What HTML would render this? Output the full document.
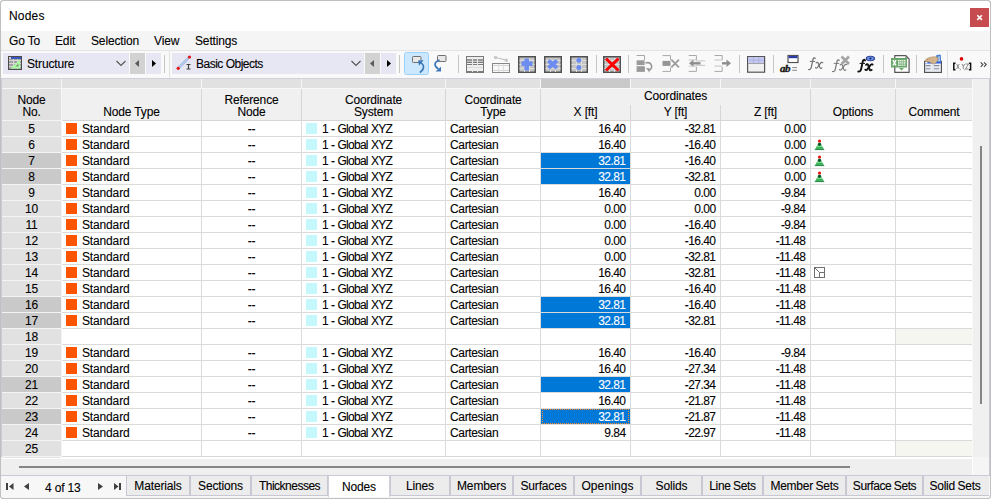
<!DOCTYPE html>
<html><head><meta charset="utf-8"><title>Nodes</title>
<style>
*{margin:0;padding:0;box-sizing:border-box}
html,body{width:991px;height:499px;overflow:hidden;background:#fff}
body{position:relative;font-family:"Liberation Sans",sans-serif;font-size:12px;color:#000;letter-spacing:-0.15px;-webkit-text-stroke:0.1px currentColor}
.a{position:absolute}
.t{position:absolute;white-space:nowrap;line-height:16px;height:16px}
.hl{position:absolute;height:1px}
.vl{position:absolute;width:1px}
.r{text-align:right;letter-spacing:-0.55px}
.c{text-align:center}
.tab{position:absolute;top:476px;height:20px;background:#e9e9ee;border:1px solid #cacad4;border-top:none;text-align:center;line-height:18px;white-space:nowrap}
</style></head><body>

<div class="a" style="left:0;top:0;width:991px;height:499px;border:1px solid #c0c0c0;border-radius:3px;background:#fff"></div>
<div class="t" style="left:9px;top:8px;letter-spacing:0.2px">Nodes</div>
<div class="a" style="left:970px;top:8px;width:19px;height:19px;background:#c64c50"></div>
<svg class="a" style="left:970px;top:8px" width="19" height="19" viewBox="0 0 19 19"><path d="M7.3 7.3l4.6 4.6M11.9 7.3l-4.6 4.6" stroke="#fff" stroke-width="1.6"/></svg>
<div class="a" style="left:1px;top:31px;width:989px;height:19px;background:#f5f5f5"></div>
<div class="t" style="left:9px;top:33px">Go To</div>
<div class="t" style="left:55px;top:33px">Edit</div>
<div class="t" style="left:91px;top:33px">Selection</div>
<div class="t" style="left:154px;top:33px">View</div>
<div class="t" style="left:195px;top:33px">Settings</div>
<div class="hl" style="left:1px;top:50px;width:989px;background:#e4e4e4"></div>
<div class="a" style="left:1px;top:51px;width:989px;height:27px;background:#f9f9f9"></div>
<div class="hl" style="left:1px;top:78px;width:989px;background:#d0d0da"></div>
<div class="a" style="left:3px;top:53px;width:126px;height:21px;background:#e6e7f2"></div>
<div class="t" style="left:27px;top:56px;letter-spacing:-0.15px">Structure</div>
<div class="a" style="left:130px;top:53px;width:15px;height:21px;background:#d2d2d2"></div>
<div class="a" style="left:146px;top:53px;width:15px;height:21px;background:#e6e7f2"></div>
<div class="a" style="left:172px;top:53px;width:192px;height:21px;background:#e6e7f2"></div>
<div class="t" style="left:196px;top:56px;letter-spacing:-0.5px">Basic Objects</div>
<div class="a" style="left:365px;top:53px;width:15px;height:21px;background:#d2d2d2"></div>
<div class="a" style="left:381px;top:53px;width:15px;height:21px;background:#e6e7f2"></div>
<svg class="a" style="left:0;top:0" width="991" height="80" viewBox="0 0 991 80"><path d="M116.5 61 L121 65.5 L125.5 61" fill="none" stroke="#555" stroke-width="1.1"/><path d="M139 60 L135 63.5 L139 67Z" fill="#5a5a5a"/><path d="M152 60 L156 63.5 L152 67Z" fill="#000"/><path d="M351.5 61 L356 65.5 L360.5 61" fill="none" stroke="#555" stroke-width="1.1"/><path d="M374 60 L370 63.5 L374 67Z" fill="#5a5a5a"/><path d="M387 60 L391 63.5 L387 67Z" fill="#000"/><path d="M164.5 55V73" stroke="#c6c6c6" stroke-width="1"/><path d="M399.5 55V73" stroke="#c6c6c6" stroke-width="1"/><path d="M458.5 55V73" stroke="#c6c6c6" stroke-width="1"/><path d="M596.5 55V73" stroke="#c6c6c6" stroke-width="1"/><path d="M628.5 55V73" stroke="#c6c6c6" stroke-width="1"/><path d="M739.5 55V73" stroke="#c6c6c6" stroke-width="1"/><path d="M773.5 55V73" stroke="#c6c6c6" stroke-width="1"/><path d="M883.5 55V73" stroke="#c6c6c6" stroke-width="1"/><path d="M916.5 55V73" stroke="#c6c6c6" stroke-width="1"/><path d="M169.5 51V78" stroke="#e2e2e2" stroke-width="1"/><path d="M947.5 51V78" stroke="#e2e2e2" stroke-width="1"/><rect x="8" y="56" width="14" height="14" fill="#4a4a4a"/>
<rect x="9" y="57" width="12" height="12" fill="#a0a0a0"/>
<path d="M9 60.5h12M9 63.5h12M9 66.5h12M13.5 59v10M17.5 59v10" stroke="#d8d8d8" stroke-width="1"/>
<rect x="11" y="57" width="10" height="2" fill="#3a56c0"/>
<rect x="9" y="57" width="2" height="2" fill="#d0d0d0"/>
<path d="M10.5 68.5 L20 59.5 L20 68.5 Z" fill="#a8fca0"/>
<path d="M15.5 66.5 L18.5 63.5 L18.5 66.5 Z" fill="#8a8a8a"/><path d="M178 68.5 L189.5 56.8" stroke="#a0b8e0" stroke-width="2.6"/>
<path d="M178 68.5 L189.5 56.8" stroke="#d0e4f8" stroke-width="0.8"/>
<circle cx="178.2" cy="68.3" r="1.6" fill="#e81010"/><circle cx="189.5" cy="57" r="1.6" fill="#e81010"/>
<path d="M186.5 64.5h4M188.5 64.5v4.5M186.5 69h4" stroke="#404040" stroke-width="1.1"/><rect x="404.5" y="52.5" width="24" height="22" rx="2" fill="#cce8ff" stroke="#99d1ff" stroke-width="1"/><rect x="412.5" y="56.5" width="8.5" height="6" rx="0.8" fill="#e8e8e8" stroke="#707070"/>
<path d="M419.5 62.5 C424.5 64 425 69 419.8 72.5" fill="none" stroke="#3d78b8" stroke-width="1.7"/>
<path d="M418 60.5 L423.6 60.3 L419 65.7 Z" fill="#3d78b8"/>
<rect x="437.5" y="55.5" width="8.5" height="6" rx="0.8" fill="#e8e8e8" stroke="#707070"/>
<path d="M439.5 60 C434 62 433.5 66 438.5 69" fill="none" stroke="#3d78b8" stroke-width="1.7"/>
<path d="M435.5 71.6 L441 66.8 L441 71.6 Z" fill="#3d78b8"/><rect x="466.5" y="56.5" width="17" height="16" fill="#f0f0f0" stroke="#7a7a7a"/>
<rect x="467" y="59" width="16" height="2.5" fill="#9a9a9a"/>
<path d="M467 62.5h16M467 64.5h16M467 71.5h16" stroke="#7a7a7a" stroke-width="1"/>
<path d="M467 67.5h16" stroke="#d8d8d8" stroke-width="1"/>
<path d="M472.5 57v15M477.5 57v15" stroke="#e8e8e8" stroke-width="1"/><path d="M495.6 57.5 L506.3 60.1" stroke="#c4c4c4" stroke-width="1.2"/>
<circle cx="495.6" cy="57.5" r="1.7" fill="#c8c8c8"/><circle cx="506.3" cy="60.2" r="1.7" fill="#c8c8c8"/>
<rect x="492.5" y="63.5" width="17" height="9" fill="#f8f8f8" stroke="#888"/>
<path d="M493 65.5h16M493 70.5h16" stroke="#d4d4d4" stroke-width="1"/>
<path d="M498.5 64v8M503.5 64v8" stroke="#e0e0e0" stroke-width="1"/><rect x="518.75" y="56.75" width="16.5" height="15.5" fill="#c4c4c4" stroke="#505050" stroke-width="1.5"/>
<path d="M519.5 60.5h15M519.5 64.5h15M519.5 68.5h15M524.5 58v14M529.5 58v14" stroke="#dcdcdc" stroke-width="1"/><path d="M526.7 58.5v12M521.5 63.6h11" stroke="#6c8cf0" stroke-width="4.6"/><rect x="544.75" y="56.75" width="16.5" height="15.5" fill="#c4c4c4" stroke="#505050" stroke-width="1.5"/>
<path d="M545.5 60.5h15M545.5 64.5h15M545.5 68.5h15M550.5 58v14M555.5 58v14" stroke="#dcdcdc" stroke-width="1"/><path d="M548.5 60.5l8.5 7.5M557 60.5l-8.5 7.5" stroke="#6c8cf0" stroke-width="4"/><rect x="570.75" y="56.75" width="16.5" height="15.5" fill="#c4c4c4" stroke="#505050" stroke-width="1.5"/>
<path d="M571.5 60.5h15M571.5 64.5h15M571.5 68.5h15M576.5 58v14M581.5 58v14" stroke="#dcdcdc" stroke-width="1"/><circle cx="578.8" cy="60.3" r="2.5" fill="#6c8cf0"/><circle cx="578.8" cy="67.6" r="2.5" fill="#6c8cf0"/><rect x="603.75" y="56.75" width="16.5" height="15.5" fill="#c4c4c4" stroke="#505050" stroke-width="1.5"/>
<path d="M604.5 60.5h15M604.5 64.5h15M604.5 68.5h15M609.5 58v14M614.5 58v14" stroke="#dcdcdc" stroke-width="1"/><path d="M606 58.7l12.5 11.8M618.5 58.7l-12.5 11.8" stroke="#ff0000" stroke-width="3"/><path d="M636.6 55.5h8M644.5 55.5v4.5M636.6 71.5h8M644.5 67v4.5" stroke="#a8a8a8" stroke-width="1"/>
<rect x="636.6" y="60.3" width="8" height="4.8" fill="#9a9a9a"/><rect x="636.6" y="66.2" width="8" height="5" fill="#9a9a9a"/>
<path d="M645.5 63 C652 61 654 69 648.5 70.5" fill="none" stroke="#9a9a9a" stroke-width="1.6"/>
<path d="M646 68 L649.5 72.8 L649.5 68.2Z" fill="#9a9a9a"/><path d="M662.5 55.6h8M670.5 55.6v4.2M662.5 71.4h8M670.5 67.5v3.9" stroke="#a8a8a8" stroke-width="1"/>
<rect x="662.5" y="60.9" width="8" height="5" fill="#959595"/>
<path d="M671.3 59.7 L679 67.3M679 59.7 L671.3 67.3" stroke="#9a9a9a" stroke-width="1.8"/><path d="M688.7 55.5h7.7M696.4 55.5v4.5M688.7 71.4h7.7M696.4 67v4.4" stroke="#a8a8a8" stroke-width="1"/>
<path d="M688.7 60h7.7M688.7 66.1h7.7M696 60.9h9.2M696 65.3h9.2" stroke="#c4c4c4" stroke-width="1"/>
<path d="M692 63.3h8.5" stroke="#8e8e8e" stroke-width="2.4"/><path d="M689 63.3 L693.5 59.8 L693.5 66.8Z" fill="#8e8e8e"/><path d="M714.5 55.5h7.7M722.2 55.5v4.5M714.5 71.4h7.7M722.2 67v4.4" stroke="#a8a8a8" stroke-width="1"/>
<path d="M714.5 60h7.7M714.5 66.1h7.7" stroke="#c4c4c4" stroke-width="1"/>
<path d="M722 63.3h6" stroke="#8e8e8e" stroke-width="2.4"/><path d="M731 63.3 L726.5 59.5 L726.5 67Z" fill="#8e8e8e"/><rect x="747.6" y="56.6" width="17" height="15.6" fill="#f0f0f0" stroke="#555" stroke-width="1.2"/>
<rect x="748.2" y="57.2" width="15.8" height="6" fill="#c4c8f4"/>
<path d="M748.2 60.2h15.8M753.5 57.2v6M758.7 57.2v6" stroke="#b0b4dc" stroke-width="1"/>
<path d="M748.2 63.5h15.8" stroke="#909090" stroke-width="0.8"/><rect x="788" y="55.5" width="10" height="7" fill="#fff" stroke="#505050" stroke-width="1.2"/>
<rect x="788.6" y="56" width="8.8" height="2.2" fill="#2a3aa8"/>
<rect x="789.6" y="59.2" width="7" height="2.2" fill="#fff"/>
<text x="780" y="71.6" font-family="Liberation Serif" font-style="italic" font-weight="bold" font-size="11" fill="#111" stroke="#111" stroke-width="0.3" letter-spacing="-0.6">ab</text>
<path d="M792.2 67.6h4.8M792.2 70.3h4.8" stroke="#888" stroke-width="1"/><g transform="translate(0 0)" fill="none" stroke="#6e6e6e" stroke-linecap="round"><path d="M815.2 58.4 c-0.5-0.9-1.8-0.8-2.1 0.6 L811.2 67.6 c-0.4 1.6-1.6 2.3-2.7 1.9" stroke-width="1.2"/><path d="M810.2 61.4h4.6" stroke-width="1"/><path d="M816.2 62.8 c0.8-0.8 1.9-0.7 2.2 0.4 l1.5 4.4 c0.3 0.9 1.3 1 2 0.3" stroke-width="1.2"/><path d="M822.8 62.6 c-0.6-0.5-1.6-0.4-2.2 0.5 l-3.2 4.4 c-0.5 0.7-1.4 0.8-1.9 0.2" stroke-width="1.2"/></g><g transform="translate(24 2)" fill="none" stroke="#7a7a7a" stroke-linecap="round"><path d="M815.2 58.4 c-0.5-0.9-1.8-0.8-2.1 0.6 L811.2 67.6 c-0.4 1.6-1.6 2.3-2.7 1.9" stroke-width="1.2"/><path d="M810.2 61.4h4.6" stroke-width="1"/><path d="M816.2 62.8 c0.8-0.8 1.9-0.7 2.2 0.4 l1.5 4.4 c0.3 0.9 1.3 1 2 0.3" stroke-width="1.2"/><path d="M822.8 62.6 c-0.6-0.5-1.6-0.4-2.2 0.5 l-3.2 4.4 c-0.5 0.7-1.4 0.8-1.9 0.2" stroke-width="1.2"/></g><path d="M841.5 56.5l7.5 7.5M849 56.5l-7.5 7.5" stroke="#a4a4a4" stroke-width="2.6"/><g transform="translate(49.8 2)" fill="none" stroke="#111" stroke-linecap="round"><path d="M815.2 58.4 c-0.5-0.9-1.8-0.8-2.1 0.6 L811.2 67.6 c-0.4 1.6-1.6 2.3-2.7 1.9" stroke-width="1.9"/><path d="M810.2 61.4h4.6" stroke-width="1"/><path d="M816.2 62.8 c0.8-0.8 1.9-0.7 2.2 0.4 l1.5 4.4 c0.3 0.9 1.3 1 2 0.3" stroke-width="1.9"/><path d="M822.8 62.6 c-0.6-0.5-1.6-0.4-2.2 0.5 l-3.2 4.4 c-0.5 0.7-1.4 0.8-1.9 0.2" stroke-width="1.9"/></g><ellipse cx="870.4" cy="58.5" rx="4.6" ry="2.8" fill="#2a3a90"/>
<ellipse cx="870.4" cy="58.5" rx="3.4" ry="1.9" fill="#6a90e0"/>
<circle cx="870.4" cy="58.5" r="1" fill="#102060"/><path d="M894.8 55.6h11l3.3 3.3v13.5h-14.3z" fill="#fff" stroke="#555" stroke-width="1.2"/>
<path d="M905.3 56.3l0 2.6 2.8 0z" fill="#666"/>
<rect x="891" y="58" width="16" height="9.5" fill="#6aa66a"/>
<path d="M893 60.2l3 5.3M896 60.2l-3 5.3" stroke="#fff" stroke-width="1.5"/>
<rect x="898" y="60" width="7.4" height="5.8" fill="#fff"/>
<path d="M898 61.6h7.4M898 63.1h7.4M898 64.6h7.4M899.9 60v5.8M901.8 60v5.8M903.6 60v5.8" stroke="#6aa66a" stroke-width="0.6"/>
<path d="M899 68h5l-2.5 2.6z" fill="#6aa66a"/><rect x="924.6" y="61.4" width="16.8" height="11" fill="#eef0f6" stroke="#4a4a4a" stroke-width="1.1"/>
<rect x="925.1" y="61.9" width="15.8" height="1.6" fill="#2a5ae8"/>
<rect x="925.2" y="62" width="2.2" height="1.3" fill="#fff"/>
<path d="M933 64v8" stroke="#dadae2" stroke-width="1"/>
<path d="M925.8 65.6h4.8M925.8 68.8h4.8M934 65.6h5.3M934 68.8h5.3" stroke="#8a8a94" stroke-width="1.1"/>
<path d="M925.8 66.8h4.8M934 66.8h5.3M925.8 70h4.8M934 70h5.3" stroke="#c8d0f0" stroke-width="0.6"/>
<path d="M936.2 55.5 Q936.5 54.8 938 54.8 L940.8 54.8 L941.2 62 L936.5 62 Z" fill="#4a7ed0"/>
<path d="M938.2 56.2 L939.8 56.2 L940 61.5 L938.4 61.5 Z" fill="#b8d0f0"/>
<path d="M924.8 61.2 C925.5 59 927.5 58 930 57.4 C932.5 56.6 935.5 56.3 937.2 57.2 C938.4 58 938.2 60 937 61.6 C935.8 63 934.6 64.2 933.2 64 C932 63.8 931.2 62.6 930 62.2 C928.5 61.8 926.2 62 924.8 61.2 Z" fill="#d6b68e" stroke="#9c7a52" stroke-width="0.5"/>
<path d="M927 60 l1.2-0.6M929.5 59.2l1.2-0.5M932 60.4l1 0.6" stroke="#9c7a52" stroke-width="0.6"/><circle cx="961.5" cy="58.9" r="1.8" fill="#e00000"/>
<path d="M955.5 63.3h-1.7v6.5h1.7M968.9 63.3h1.7v6.5h-1.7" fill="none" stroke="#111" stroke-width="1.5"/>
<path d="M956.6 64l2.6 5M959.2 64l-2.6 5M962 64l1.3 2.4l1.3-2.4M963.3 66.4v2.6M965.5 64h3l-3 5h3" fill="none" stroke="#707070" stroke-width="0.8"/>
<path d="M960.5 69.3l-0.4 0.9M965 69.3l-0.4 0.9" stroke="#505050" stroke-width="0.8"/><path d="M980.7 62.3l2.2 2.3-2.2 2.3M984 62.3l2.2 2.3-2.2 2.3" fill="none" stroke="#444" stroke-width="1.1"/></svg>
<div class="a" style="left:1px;top:79px;width:971px;height:9px;background:#e1e1e1"></div>
<div class="a" style="left:541px;top:79px;width:89px;height:9px;background:#c9c9c9"></div>
<div class="hl" style="left:1px;top:88px;width:971px;background:#f7f7f7"></div>
<div class="vl" style="left:61px;top:79px;height:9px;background:#f7f7f7"></div>
<div class="vl" style="left:201px;top:79px;height:9px;background:#f7f7f7"></div>
<div class="vl" style="left:301px;top:79px;height:9px;background:#f7f7f7"></div>
<div class="vl" style="left:445px;top:79px;height:9px;background:#f7f7f7"></div>
<div class="vl" style="left:540px;top:79px;height:9px;background:#f7f7f7"></div>
<div class="vl" style="left:630px;top:79px;height:9px;background:#f7f7f7"></div>
<div class="vl" style="left:720px;top:79px;height:9px;background:#f7f7f7"></div>
<div class="vl" style="left:810px;top:79px;height:9px;background:#f7f7f7"></div>
<div class="vl" style="left:895px;top:79px;height:9px;background:#f7f7f7"></div>
<div class="a" style="left:1px;top:89px;width:971px;height:31px;background:#f0f0f0"></div>
<div class="a" style="left:2px;top:89px;width:59px;height:31px;background:#e1e1e1"></div>
<div class="vl" style="left:61px;top:89px;height:31px;background:#f7f7f7"></div>
<div class="vl" style="left:201px;top:89px;height:31px;background:#d6d6d6"></div>
<div class="vl" style="left:301px;top:89px;height:31px;background:#d6d6d6"></div>
<div class="vl" style="left:445px;top:89px;height:31px;background:#d6d6d6"></div>
<div class="vl" style="left:540px;top:89px;height:31px;background:#d6d6d6"></div>
<div class="vl" style="left:810px;top:89px;height:31px;background:#d6d6d6"></div>
<div class="vl" style="left:895px;top:89px;height:31px;background:#d6d6d6"></div>
<div class="vl" style="left:630px;top:105px;height:15px;background:#d6d6d6"></div>
<div class="vl" style="left:720px;top:105px;height:15px;background:#d6d6d6"></div>
<div class="hl" style="left:62px;top:120px;width:910px;background:#d6d6d6"></div>
<div class="hl" style="left:2px;top:120px;width:59px;background:#f4f4f4"></div>
<div class="t c" style="left:2px;top:92px;width:59px">Node</div>
<div class="t c" style="left:2px;top:104px;width:59px">No.</div>
<div class="t c" style="left:62px;top:104px;width:139px">Node Type</div>
<div class="t c" style="left:202px;top:92px;width:99px">Reference</div>
<div class="t c" style="left:202px;top:104px;width:99px">Node</div>
<div class="t c" style="left:302px;top:92px;width:143px">Coordinate</div>
<div class="t c" style="left:302px;top:104px;width:143px">System</div>
<div class="t c" style="left:446px;top:92px;width:94px">Coordinate</div>
<div class="t c" style="left:446px;top:104px;width:94px">Type</div>
<div class="t c" style="left:541px;top:88px;width:269px">Coordinates</div>
<div class="t c" style="left:541px;top:104px;width:89px">X [ft]</div>
<div class="t c" style="left:631px;top:104px;width:89px">Y [ft]</div>
<div class="t c" style="left:721px;top:104px;width:89px">Z [ft]</div>
<div class="t c" style="left:811px;top:104px;width:84px">Options</div>
<div class="t c" style="left:896px;top:104px;width:76px">Comment</div>
<div class="a" style="left:62px;top:121px;width:910px;height:336px;background:#fff"></div>
<div class="a" style="left:2px;top:121px;width:59px;height:15px;background:#e1e1e1"></div>
<div class="hl" style="left:2px;top:136px;width:59px;background:#f4f4f4"></div>
<div class="hl" style="left:62px;top:136px;width:910px;background:#dadada"></div>
<div class="t c" style="left:2px;top:121px;width:59px">5</div>
<div class="a" style="left:66px;top:123px;width:11px;height:11px;background:#ff5500"></div>
<div class="t" style="left:82px;top:121px">Standard</div>
<div class="t c" style="left:202px;top:121px;width:99px">--</div>
<div class="a" style="left:306px;top:123px;width:11px;height:11px;background:#c4f8fc"></div>
<div class="t" style="left:322px;top:121px;letter-spacing:-0.75px;word-spacing:0.6px">1 - Global XYZ</div>
<div class="t" style="left:450px;top:121px;letter-spacing:-0.35px">Cartesian</div>
<div class="t r" style="left:541px;top:121px;width:84.5px">16.40</div>
<div class="t r" style="left:631px;top:121px;width:84.5px">-32.81</div>
<div class="t r" style="left:721px;top:121px;width:84.5px">0.00</div>
<div class="a" style="left:2px;top:137px;width:59px;height:15px;background:#e1e1e1"></div>
<div class="hl" style="left:2px;top:152px;width:59px;background:#f4f4f4"></div>
<div class="hl" style="left:62px;top:152px;width:910px;background:#dadada"></div>
<div class="t c" style="left:2px;top:137px;width:59px">6</div>
<div class="a" style="left:66px;top:139px;width:11px;height:11px;background:#ff5500"></div>
<div class="t" style="left:82px;top:137px">Standard</div>
<div class="t c" style="left:202px;top:137px;width:99px">--</div>
<div class="a" style="left:306px;top:139px;width:11px;height:11px;background:#c4f8fc"></div>
<div class="t" style="left:322px;top:137px;letter-spacing:-0.75px;word-spacing:0.6px">1 - Global XYZ</div>
<div class="t" style="left:450px;top:137px;letter-spacing:-0.35px">Cartesian</div>
<div class="t r" style="left:541px;top:137px;width:84.5px">16.40</div>
<div class="t r" style="left:631px;top:137px;width:84.5px">-16.40</div>
<div class="t r" style="left:721px;top:137px;width:84.5px">0.00</div>
<svg class="a" style="left:814px;top:137px" width="12" height="14" viewBox="0 0 12 14">
<path d="M3.5 8.3 L7.5 8.3 L10.2 12.6 L0.8 12.6 Z" fill="#3cb45a"/>
<path d="M3.5 8.3 L7.5 8.3 L8.5 10 L2.5 10 Z" fill="#7ad890"/>
<path d="M0.8 12.6h9.4" stroke="#1f7a3a" stroke-width="0.9"/>
<circle cx="5.5" cy="7.2" r="1.7" fill="#0c5a28"/>
<circle cx="5.5" cy="4" r="1.6" fill="#f01010"/>
</svg>
<div class="a" style="left:2px;top:153px;width:59px;height:15px;background:#c9c9c9"></div>
<div class="hl" style="left:2px;top:168px;width:59px;background:#f4f4f4"></div>
<div class="hl" style="left:62px;top:168px;width:910px;background:#dadada"></div>
<div class="t c" style="left:2px;top:153px;width:59px">7</div>
<div class="a" style="left:66px;top:155px;width:11px;height:11px;background:#ff5500"></div>
<div class="t" style="left:82px;top:153px">Standard</div>
<div class="t c" style="left:202px;top:153px;width:99px">--</div>
<div class="a" style="left:306px;top:155px;width:11px;height:11px;background:#c4f8fc"></div>
<div class="t" style="left:322px;top:153px;letter-spacing:-0.75px;word-spacing:0.6px">1 - Global XYZ</div>
<div class="t" style="left:450px;top:153px;letter-spacing:-0.35px">Cartesian</div>
<div class="a" style="left:541px;top:153px;width:89px;height:15px;background:#0078d7"></div>
<div class="t r" style="left:541px;top:153px;width:84.5px;color:#fff">32.81</div>
<div class="t r" style="left:631px;top:153px;width:84.5px">-16.40</div>
<div class="t r" style="left:721px;top:153px;width:84.5px">0.00</div>
<svg class="a" style="left:814px;top:153px" width="12" height="14" viewBox="0 0 12 14">
<path d="M3.5 8.3 L7.5 8.3 L10.2 12.6 L0.8 12.6 Z" fill="#3cb45a"/>
<path d="M3.5 8.3 L7.5 8.3 L8.5 10 L2.5 10 Z" fill="#7ad890"/>
<path d="M0.8 12.6h9.4" stroke="#1f7a3a" stroke-width="0.9"/>
<circle cx="5.5" cy="7.2" r="1.7" fill="#0c5a28"/>
<circle cx="5.5" cy="4" r="1.6" fill="#f01010"/>
</svg>
<div class="a" style="left:2px;top:169px;width:59px;height:15px;background:#c9c9c9"></div>
<div class="hl" style="left:2px;top:184px;width:59px;background:#f4f4f4"></div>
<div class="hl" style="left:62px;top:184px;width:910px;background:#dadada"></div>
<div class="t c" style="left:2px;top:169px;width:59px">8</div>
<div class="a" style="left:66px;top:171px;width:11px;height:11px;background:#ff5500"></div>
<div class="t" style="left:82px;top:169px">Standard</div>
<div class="t c" style="left:202px;top:169px;width:99px">--</div>
<div class="a" style="left:306px;top:171px;width:11px;height:11px;background:#c4f8fc"></div>
<div class="t" style="left:322px;top:169px;letter-spacing:-0.75px;word-spacing:0.6px">1 - Global XYZ</div>
<div class="t" style="left:450px;top:169px;letter-spacing:-0.35px">Cartesian</div>
<div class="a" style="left:541px;top:169px;width:89px;height:15px;background:#0078d7"></div>
<div class="t r" style="left:541px;top:169px;width:84.5px;color:#fff">32.81</div>
<div class="t r" style="left:631px;top:169px;width:84.5px">-32.81</div>
<div class="t r" style="left:721px;top:169px;width:84.5px">0.00</div>
<svg class="a" style="left:814px;top:169px" width="12" height="14" viewBox="0 0 12 14">
<path d="M3.5 8.3 L7.5 8.3 L10.2 12.6 L0.8 12.6 Z" fill="#3cb45a"/>
<path d="M3.5 8.3 L7.5 8.3 L8.5 10 L2.5 10 Z" fill="#7ad890"/>
<path d="M0.8 12.6h9.4" stroke="#1f7a3a" stroke-width="0.9"/>
<circle cx="5.5" cy="7.2" r="1.7" fill="#0c5a28"/>
<circle cx="5.5" cy="4" r="1.6" fill="#f01010"/>
</svg>
<div class="a" style="left:2px;top:185px;width:59px;height:15px;background:#e1e1e1"></div>
<div class="hl" style="left:2px;top:200px;width:59px;background:#f4f4f4"></div>
<div class="hl" style="left:62px;top:200px;width:910px;background:#dadada"></div>
<div class="t c" style="left:2px;top:185px;width:59px">9</div>
<div class="a" style="left:66px;top:187px;width:11px;height:11px;background:#ff5500"></div>
<div class="t" style="left:82px;top:185px">Standard</div>
<div class="t c" style="left:202px;top:185px;width:99px">--</div>
<div class="a" style="left:306px;top:187px;width:11px;height:11px;background:#c4f8fc"></div>
<div class="t" style="left:322px;top:185px;letter-spacing:-0.75px;word-spacing:0.6px">1 - Global XYZ</div>
<div class="t" style="left:450px;top:185px;letter-spacing:-0.35px">Cartesian</div>
<div class="t r" style="left:541px;top:185px;width:84.5px">16.40</div>
<div class="t r" style="left:631px;top:185px;width:84.5px">0.00</div>
<div class="t r" style="left:721px;top:185px;width:84.5px">-9.84</div>
<div class="a" style="left:2px;top:201px;width:59px;height:15px;background:#e1e1e1"></div>
<div class="hl" style="left:2px;top:216px;width:59px;background:#f4f4f4"></div>
<div class="hl" style="left:62px;top:216px;width:910px;background:#dadada"></div>
<div class="t c" style="left:2px;top:201px;width:59px">10</div>
<div class="a" style="left:66px;top:203px;width:11px;height:11px;background:#ff5500"></div>
<div class="t" style="left:82px;top:201px">Standard</div>
<div class="t c" style="left:202px;top:201px;width:99px">--</div>
<div class="a" style="left:306px;top:203px;width:11px;height:11px;background:#c4f8fc"></div>
<div class="t" style="left:322px;top:201px;letter-spacing:-0.75px;word-spacing:0.6px">1 - Global XYZ</div>
<div class="t" style="left:450px;top:201px;letter-spacing:-0.35px">Cartesian</div>
<div class="t r" style="left:541px;top:201px;width:84.5px">0.00</div>
<div class="t r" style="left:631px;top:201px;width:84.5px">0.00</div>
<div class="t r" style="left:721px;top:201px;width:84.5px">-9.84</div>
<div class="a" style="left:2px;top:217px;width:59px;height:15px;background:#e1e1e1"></div>
<div class="hl" style="left:2px;top:232px;width:59px;background:#f4f4f4"></div>
<div class="hl" style="left:62px;top:232px;width:910px;background:#dadada"></div>
<div class="t c" style="left:2px;top:217px;width:59px">11</div>
<div class="a" style="left:66px;top:219px;width:11px;height:11px;background:#ff5500"></div>
<div class="t" style="left:82px;top:217px">Standard</div>
<div class="t c" style="left:202px;top:217px;width:99px">--</div>
<div class="a" style="left:306px;top:219px;width:11px;height:11px;background:#c4f8fc"></div>
<div class="t" style="left:322px;top:217px;letter-spacing:-0.75px;word-spacing:0.6px">1 - Global XYZ</div>
<div class="t" style="left:450px;top:217px;letter-spacing:-0.35px">Cartesian</div>
<div class="t r" style="left:541px;top:217px;width:84.5px">0.00</div>
<div class="t r" style="left:631px;top:217px;width:84.5px">-16.40</div>
<div class="t r" style="left:721px;top:217px;width:84.5px">-9.84</div>
<div class="a" style="left:2px;top:233px;width:59px;height:15px;background:#e1e1e1"></div>
<div class="hl" style="left:2px;top:248px;width:59px;background:#f4f4f4"></div>
<div class="hl" style="left:62px;top:248px;width:910px;background:#dadada"></div>
<div class="t c" style="left:2px;top:233px;width:59px">12</div>
<div class="a" style="left:66px;top:235px;width:11px;height:11px;background:#ff5500"></div>
<div class="t" style="left:82px;top:233px">Standard</div>
<div class="t c" style="left:202px;top:233px;width:99px">--</div>
<div class="a" style="left:306px;top:235px;width:11px;height:11px;background:#c4f8fc"></div>
<div class="t" style="left:322px;top:233px;letter-spacing:-0.75px;word-spacing:0.6px">1 - Global XYZ</div>
<div class="t" style="left:450px;top:233px;letter-spacing:-0.35px">Cartesian</div>
<div class="t r" style="left:541px;top:233px;width:84.5px">0.00</div>
<div class="t r" style="left:631px;top:233px;width:84.5px">-16.40</div>
<div class="t r" style="left:721px;top:233px;width:84.5px">-11.48</div>
<div class="a" style="left:2px;top:249px;width:59px;height:15px;background:#e1e1e1"></div>
<div class="hl" style="left:2px;top:264px;width:59px;background:#f4f4f4"></div>
<div class="hl" style="left:62px;top:264px;width:910px;background:#dadada"></div>
<div class="t c" style="left:2px;top:249px;width:59px">13</div>
<div class="a" style="left:66px;top:251px;width:11px;height:11px;background:#ff5500"></div>
<div class="t" style="left:82px;top:249px">Standard</div>
<div class="t c" style="left:202px;top:249px;width:99px">--</div>
<div class="a" style="left:306px;top:251px;width:11px;height:11px;background:#c4f8fc"></div>
<div class="t" style="left:322px;top:249px;letter-spacing:-0.75px;word-spacing:0.6px">1 - Global XYZ</div>
<div class="t" style="left:450px;top:249px;letter-spacing:-0.35px">Cartesian</div>
<div class="t r" style="left:541px;top:249px;width:84.5px">0.00</div>
<div class="t r" style="left:631px;top:249px;width:84.5px">-32.81</div>
<div class="t r" style="left:721px;top:249px;width:84.5px">-11.48</div>
<div class="a" style="left:2px;top:265px;width:59px;height:15px;background:#e1e1e1"></div>
<div class="hl" style="left:2px;top:280px;width:59px;background:#f4f4f4"></div>
<div class="hl" style="left:62px;top:280px;width:910px;background:#dadada"></div>
<div class="t c" style="left:2px;top:265px;width:59px">14</div>
<div class="a" style="left:66px;top:267px;width:11px;height:11px;background:#ff5500"></div>
<div class="t" style="left:82px;top:265px">Standard</div>
<div class="t c" style="left:202px;top:265px;width:99px">--</div>
<div class="a" style="left:306px;top:267px;width:11px;height:11px;background:#c4f8fc"></div>
<div class="t" style="left:322px;top:265px;letter-spacing:-0.75px;word-spacing:0.6px">1 - Global XYZ</div>
<div class="t" style="left:450px;top:265px;letter-spacing:-0.35px">Cartesian</div>
<div class="t r" style="left:541px;top:265px;width:84.5px">16.40</div>
<div class="t r" style="left:631px;top:265px;width:84.5px">-32.81</div>
<div class="t r" style="left:721px;top:265px;width:84.5px">-11.48</div>
<svg class="a" style="left:814px;top:267px" width="11" height="11" viewBox="0 0 11 11">
<rect x="0.5" y="0.5" width="10" height="10" fill="none" stroke="#707070"/>
<path d="M5.5 10.5V5.5H10.5M0.5 0.5L5.5 5.5" fill="none" stroke="#707070"/>
</svg>
<div class="a" style="left:2px;top:281px;width:59px;height:15px;background:#e1e1e1"></div>
<div class="hl" style="left:2px;top:296px;width:59px;background:#f4f4f4"></div>
<div class="hl" style="left:62px;top:296px;width:910px;background:#dadada"></div>
<div class="t c" style="left:2px;top:281px;width:59px">15</div>
<div class="a" style="left:66px;top:283px;width:11px;height:11px;background:#ff5500"></div>
<div class="t" style="left:82px;top:281px">Standard</div>
<div class="t c" style="left:202px;top:281px;width:99px">--</div>
<div class="a" style="left:306px;top:283px;width:11px;height:11px;background:#c4f8fc"></div>
<div class="t" style="left:322px;top:281px;letter-spacing:-0.75px;word-spacing:0.6px">1 - Global XYZ</div>
<div class="t" style="left:450px;top:281px;letter-spacing:-0.35px">Cartesian</div>
<div class="t r" style="left:541px;top:281px;width:84.5px">16.40</div>
<div class="t r" style="left:631px;top:281px;width:84.5px">-16.40</div>
<div class="t r" style="left:721px;top:281px;width:84.5px">-11.48</div>
<div class="a" style="left:2px;top:297px;width:59px;height:15px;background:#c9c9c9"></div>
<div class="hl" style="left:2px;top:312px;width:59px;background:#f4f4f4"></div>
<div class="hl" style="left:62px;top:312px;width:910px;background:#dadada"></div>
<div class="t c" style="left:2px;top:297px;width:59px">16</div>
<div class="a" style="left:66px;top:299px;width:11px;height:11px;background:#ff5500"></div>
<div class="t" style="left:82px;top:297px">Standard</div>
<div class="t c" style="left:202px;top:297px;width:99px">--</div>
<div class="a" style="left:306px;top:299px;width:11px;height:11px;background:#c4f8fc"></div>
<div class="t" style="left:322px;top:297px;letter-spacing:-0.75px;word-spacing:0.6px">1 - Global XYZ</div>
<div class="t" style="left:450px;top:297px;letter-spacing:-0.35px">Cartesian</div>
<div class="a" style="left:541px;top:297px;width:89px;height:15px;background:#0078d7"></div>
<div class="t r" style="left:541px;top:297px;width:84.5px;color:#fff">32.81</div>
<div class="t r" style="left:631px;top:297px;width:84.5px">-16.40</div>
<div class="t r" style="left:721px;top:297px;width:84.5px">-11.48</div>
<div class="a" style="left:2px;top:313px;width:59px;height:15px;background:#c9c9c9"></div>
<div class="hl" style="left:2px;top:328px;width:59px;background:#f4f4f4"></div>
<div class="hl" style="left:62px;top:328px;width:910px;background:#dadada"></div>
<div class="t c" style="left:2px;top:313px;width:59px">17</div>
<div class="a" style="left:66px;top:315px;width:11px;height:11px;background:#ff5500"></div>
<div class="t" style="left:82px;top:313px">Standard</div>
<div class="t c" style="left:202px;top:313px;width:99px">--</div>
<div class="a" style="left:306px;top:315px;width:11px;height:11px;background:#c4f8fc"></div>
<div class="t" style="left:322px;top:313px;letter-spacing:-0.75px;word-spacing:0.6px">1 - Global XYZ</div>
<div class="t" style="left:450px;top:313px;letter-spacing:-0.35px">Cartesian</div>
<div class="a" style="left:541px;top:313px;width:89px;height:15px;background:#0078d7"></div>
<div class="t r" style="left:541px;top:313px;width:84.5px;color:#fff">32.81</div>
<div class="t r" style="left:631px;top:313px;width:84.5px">-32.81</div>
<div class="t r" style="left:721px;top:313px;width:84.5px">-11.48</div>
<div class="a" style="left:2px;top:329px;width:59px;height:15px;background:#e1e1e1"></div>
<div class="hl" style="left:2px;top:344px;width:59px;background:#f4f4f4"></div>
<div class="hl" style="left:62px;top:344px;width:910px;background:#dadada"></div>
<div class="t c" style="left:2px;top:329px;width:59px">18</div>
<div class="a" style="left:896px;top:329px;width:76px;height:15px;background:#f6f6f0"></div>
<div class="a" style="left:2px;top:345px;width:59px;height:15px;background:#e1e1e1"></div>
<div class="hl" style="left:2px;top:360px;width:59px;background:#f4f4f4"></div>
<div class="hl" style="left:62px;top:360px;width:910px;background:#dadada"></div>
<div class="t c" style="left:2px;top:345px;width:59px">19</div>
<div class="a" style="left:66px;top:347px;width:11px;height:11px;background:#ff5500"></div>
<div class="t" style="left:82px;top:345px">Standard</div>
<div class="t c" style="left:202px;top:345px;width:99px">--</div>
<div class="a" style="left:306px;top:347px;width:11px;height:11px;background:#c4f8fc"></div>
<div class="t" style="left:322px;top:345px;letter-spacing:-0.75px;word-spacing:0.6px">1 - Global XYZ</div>
<div class="t" style="left:450px;top:345px;letter-spacing:-0.35px">Cartesian</div>
<div class="t r" style="left:541px;top:345px;width:84.5px">16.40</div>
<div class="t r" style="left:631px;top:345px;width:84.5px">-16.40</div>
<div class="t r" style="left:721px;top:345px;width:84.5px">-9.84</div>
<div class="a" style="left:2px;top:361px;width:59px;height:15px;background:#e1e1e1"></div>
<div class="hl" style="left:2px;top:376px;width:59px;background:#f4f4f4"></div>
<div class="hl" style="left:62px;top:376px;width:910px;background:#dadada"></div>
<div class="t c" style="left:2px;top:361px;width:59px">20</div>
<div class="a" style="left:66px;top:363px;width:11px;height:11px;background:#ff5500"></div>
<div class="t" style="left:82px;top:361px">Standard</div>
<div class="t c" style="left:202px;top:361px;width:99px">--</div>
<div class="a" style="left:306px;top:363px;width:11px;height:11px;background:#c4f8fc"></div>
<div class="t" style="left:322px;top:361px;letter-spacing:-0.75px;word-spacing:0.6px">1 - Global XYZ</div>
<div class="t" style="left:450px;top:361px;letter-spacing:-0.35px">Cartesian</div>
<div class="t r" style="left:541px;top:361px;width:84.5px">16.40</div>
<div class="t r" style="left:631px;top:361px;width:84.5px">-27.34</div>
<div class="t r" style="left:721px;top:361px;width:84.5px">-11.48</div>
<div class="a" style="left:2px;top:377px;width:59px;height:15px;background:#c9c9c9"></div>
<div class="hl" style="left:2px;top:392px;width:59px;background:#f4f4f4"></div>
<div class="hl" style="left:62px;top:392px;width:910px;background:#dadada"></div>
<div class="t c" style="left:2px;top:377px;width:59px">21</div>
<div class="a" style="left:66px;top:379px;width:11px;height:11px;background:#ff5500"></div>
<div class="t" style="left:82px;top:377px">Standard</div>
<div class="t c" style="left:202px;top:377px;width:99px">--</div>
<div class="a" style="left:306px;top:379px;width:11px;height:11px;background:#c4f8fc"></div>
<div class="t" style="left:322px;top:377px;letter-spacing:-0.75px;word-spacing:0.6px">1 - Global XYZ</div>
<div class="t" style="left:450px;top:377px;letter-spacing:-0.35px">Cartesian</div>
<div class="a" style="left:541px;top:377px;width:89px;height:15px;background:#0078d7"></div>
<div class="t r" style="left:541px;top:377px;width:84.5px;color:#fff">32.81</div>
<div class="t r" style="left:631px;top:377px;width:84.5px">-27.34</div>
<div class="t r" style="left:721px;top:377px;width:84.5px">-11.48</div>
<div class="a" style="left:2px;top:393px;width:59px;height:15px;background:#e1e1e1"></div>
<div class="hl" style="left:2px;top:408px;width:59px;background:#f4f4f4"></div>
<div class="hl" style="left:62px;top:408px;width:910px;background:#dadada"></div>
<div class="t c" style="left:2px;top:393px;width:59px">22</div>
<div class="a" style="left:66px;top:395px;width:11px;height:11px;background:#ff5500"></div>
<div class="t" style="left:82px;top:393px">Standard</div>
<div class="t c" style="left:202px;top:393px;width:99px">--</div>
<div class="a" style="left:306px;top:395px;width:11px;height:11px;background:#c4f8fc"></div>
<div class="t" style="left:322px;top:393px;letter-spacing:-0.75px;word-spacing:0.6px">1 - Global XYZ</div>
<div class="t" style="left:450px;top:393px;letter-spacing:-0.35px">Cartesian</div>
<div class="t r" style="left:541px;top:393px;width:84.5px">16.40</div>
<div class="t r" style="left:631px;top:393px;width:84.5px">-21.87</div>
<div class="t r" style="left:721px;top:393px;width:84.5px">-11.48</div>
<div class="a" style="left:2px;top:409px;width:59px;height:15px;background:#c9c9c9"></div>
<div class="hl" style="left:2px;top:424px;width:59px;background:#f4f4f4"></div>
<div class="hl" style="left:62px;top:424px;width:910px;background:#dadada"></div>
<div class="t c" style="left:2px;top:409px;width:59px">23</div>
<div class="a" style="left:66px;top:411px;width:11px;height:11px;background:#ff5500"></div>
<div class="t" style="left:82px;top:409px">Standard</div>
<div class="t c" style="left:202px;top:409px;width:99px">--</div>
<div class="a" style="left:306px;top:411px;width:11px;height:11px;background:#c4f8fc"></div>
<div class="t" style="left:322px;top:409px;letter-spacing:-0.75px;word-spacing:0.6px">1 - Global XYZ</div>
<div class="t" style="left:450px;top:409px;letter-spacing:-0.35px">Cartesian</div>
<div class="a" style="left:541px;top:409px;width:89px;height:15px;background:#0078d7"></div>
<div class="a" style="left:542px;top:409px;width:87px;height:15px;border:1px dotted #ff8a28"></div>
<div class="t r" style="left:541px;top:409px;width:84.5px;color:#fff">32.81</div>
<div class="t r" style="left:631px;top:409px;width:84.5px">-21.87</div>
<div class="t r" style="left:721px;top:409px;width:84.5px">-11.48</div>
<div class="a" style="left:2px;top:425px;width:59px;height:15px;background:#e1e1e1"></div>
<div class="hl" style="left:2px;top:440px;width:59px;background:#f4f4f4"></div>
<div class="hl" style="left:62px;top:440px;width:910px;background:#dadada"></div>
<div class="t c" style="left:2px;top:425px;width:59px">24</div>
<div class="a" style="left:66px;top:427px;width:11px;height:11px;background:#ff5500"></div>
<div class="t" style="left:82px;top:425px">Standard</div>
<div class="t c" style="left:202px;top:425px;width:99px">--</div>
<div class="a" style="left:306px;top:427px;width:11px;height:11px;background:#c4f8fc"></div>
<div class="t" style="left:322px;top:425px;letter-spacing:-0.75px;word-spacing:0.6px">1 - Global XYZ</div>
<div class="t" style="left:450px;top:425px;letter-spacing:-0.35px">Cartesian</div>
<div class="t r" style="left:541px;top:425px;width:84.5px">9.84</div>
<div class="t r" style="left:631px;top:425px;width:84.5px">-22.97</div>
<div class="t r" style="left:721px;top:425px;width:84.5px">-11.48</div>
<div class="a" style="left:2px;top:441px;width:59px;height:15px;background:#e1e1e1"></div>
<div class="hl" style="left:2px;top:456px;width:59px;background:#f4f4f4"></div>
<div class="hl" style="left:62px;top:456px;width:910px;background:#dadada"></div>
<div class="t c" style="left:2px;top:441px;width:59px">25</div>
<div class="a" style="left:896px;top:441px;width:76px;height:15px;background:#f6f6f0"></div>
<div class="vl" style="left:201px;top:121px;height:336px;background:#dadada"></div>
<div class="vl" style="left:301px;top:121px;height:336px;background:#dadada"></div>
<div class="vl" style="left:445px;top:121px;height:336px;background:#dadada"></div>
<div class="vl" style="left:540px;top:121px;height:336px;background:#dadada"></div>
<div class="vl" style="left:630px;top:121px;height:336px;background:#dadada"></div>
<div class="vl" style="left:720px;top:121px;height:336px;background:#dadada"></div>
<div class="vl" style="left:810px;top:121px;height:336px;background:#dadada"></div>
<div class="vl" style="left:895px;top:121px;height:336px;background:#dadada"></div>
<div class="vl" style="left:61px;top:121px;height:336px;background:#f4f4f4"></div>
<div class="vl" style="left:1px;top:79px;height:396px;background:#cacad8"></div>
<div class="a" style="left:973px;top:79px;width:16px;height:378px;background:#f0f0f0"></div>
<div class="vl" style="left:972px;top:79px;height:378px;background:#fafafa"></div>
<div class="vl" style="left:989px;top:79px;height:396px;background:#cacad8"></div>
<div class="a" style="left:980px;top:146px;width:2px;height:258px;background:#858585"></div>
<div class="a" style="left:1px;top:457px;width:971px;height:18px;background:#efefef"></div>
<div class="a" style="left:2px;top:457px;width:971px;height:2px;background:#fff"></div>
<div class="hl" style="left:2px;top:457px;width:59px;background:#e4e4e4"></div>
<div class="a" style="left:973px;top:457px;width:16px;height:18px;background:#f5f5f5"></div>
<div class="a" style="left:19px;top:466px;width:831px;height:2px;background:#858585"></div>
<div class="hl" style="left:1px;top:475px;width:989px;background:#cacad8"></div>
<div class="a" style="left:1px;top:476px;width:989px;height:22px;background:#f7f7f7"></div>
<svg class="a" style="left:5px;top:482px" width="120" height="9" viewBox="0 0 120 9">
<rect x="1" y="1" width="2" height="7" fill="#404040"/><path d="M8.5 1 L4 4.5 L8.5 8Z" fill="#404040"/>
<path d="M24 1 L19 4.5 L24 8Z" fill="#404040"/>
<path d="M93 1 L98 4.5 L93 8Z" fill="#404040"/>
<path d="M109 1 L113.5 4.5 L109 8Z" fill="#404040"/><rect x="114" y="1" width="2" height="7" fill="#404040"/>
</svg>
<div class="t" style="left:45px;top:480px">4 of 13</div>
<div class="a" style="left:126px;top:476px;width:64px;height:20px;background:#ececec;border:1px solid #c8c8d4;border-top:none"></div>
<div class="t c" style="left:126px;top:478px;width:64px;">Materials</div>
<div class="a" style="left:190px;top:476px;width:61px;height:20px;background:#ececec;border:1px solid #c8c8d4;border-top:none"></div>
<div class="t c" style="left:190px;top:478px;width:61px;">Sections</div>
<div class="a" style="left:251px;top:476px;width:77px;height:20px;background:#ececec;border:1px solid #c8c8d4;border-top:none"></div>
<div class="t c" style="left:251px;top:478px;width:77px;letter-spacing:-0.5px;">Thicknesses</div>
<div class="a" style="left:328px;top:476px;width:62px;height:21px;background:#fff;border-left:1px solid #d0d0da;border-right:1px solid #d0d0da"></div>
<div class="t c" style="left:328px;top:479px;width:62px">Nodes</div>
<div class="a" style="left:390px;top:476px;width:60px;height:20px;background:#ececec;border:1px solid #c8c8d4;border-top:none"></div>
<div class="t c" style="left:390px;top:478px;width:60px;">Lines</div>
<div class="a" style="left:450px;top:476px;width:63px;height:20px;background:#ececec;border:1px solid #c8c8d4;border-top:none"></div>
<div class="t c" style="left:450px;top:478px;width:63px;">Members</div>
<div class="a" style="left:513px;top:476px;width:61px;height:20px;background:#ececec;border:1px solid #c8c8d4;border-top:none"></div>
<div class="t c" style="left:513px;top:478px;width:61px;">Surfaces</div>
<div class="a" style="left:574px;top:476px;width:67px;height:20px;background:#ececec;border:1px solid #c8c8d4;border-top:none"></div>
<div class="t c" style="left:574px;top:478px;width:67px;letter-spacing:0.1px;">Openings</div>
<div class="a" style="left:641px;top:476px;width:61px;height:20px;background:#ececec;border:1px solid #c8c8d4;border-top:none"></div>
<div class="t c" style="left:641px;top:478px;width:61px;">Solids</div>
<div class="a" style="left:702px;top:476px;width:61px;height:20px;background:#ececec;border:1px solid #c8c8d4;border-top:none"></div>
<div class="t c" style="left:702px;top:478px;width:61px;word-spacing:-0.5px;letter-spacing:-0.35px;">Line Sets</div>
<div class="a" style="left:763px;top:476px;width:83px;height:20px;background:#ececec;border:1px solid #c8c8d4;border-top:none"></div>
<div class="t c" style="left:763px;top:478px;width:83px;word-spacing:-0.5px;letter-spacing:-0.25px;">Member Sets</div>
<div class="a" style="left:846px;top:476px;width:77px;height:20px;background:#ececec;border:1px solid #c8c8d4;border-top:none"></div>
<div class="t c" style="left:846px;top:478px;width:77px;word-spacing:-0.5px;letter-spacing:-0.4px;">Surface Sets</div>
<div class="a" style="left:923px;top:476px;width:66px;height:20px;background:#ececec;border:1px solid #c8c8d4;border-top:none;border-right:none"></div>
<div class="t c" style="left:923px;top:478px;width:64px;word-spacing:-0.5px;letter-spacing:-0.25px;">Solid Sets</div>
<div class="a" style="left:0;top:0;width:991px;height:499px;border:1px solid #c0c0c0;border-radius:3px;pointer-events:none"></div>
</body></html>
